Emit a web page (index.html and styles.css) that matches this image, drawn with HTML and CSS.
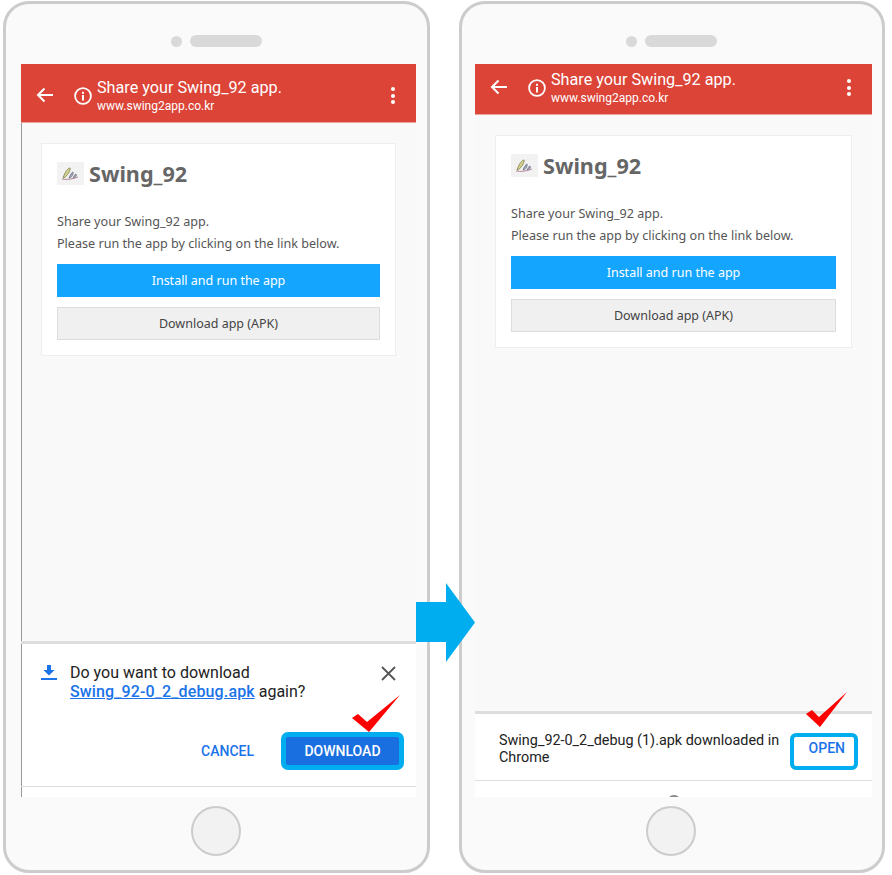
FILE: index.html
```html
<!DOCTYPE html>
<html lang="en">
  <head>
    <meta charset="UTF-8" />
    <meta name="viewport" content="width=device-width, initial-scale=1.0" />
    <title>Swing_92 download steps</title>
    <link rel="stylesheet" href="styles.css">
  </head>

  <body>
    <div class="page">
      <!-- step 1 -->
      <div class="phone phone-left">
        <div class="speaker"><span class="dot"></span><span class="pill"></span></div>
        <div class="screen screen-left">
          <div class="appbar appbar-tall">
            <svg class="back" width="18" height="16" viewBox="0 0 18 16"><path d="M17 8H2M8.500 1.500 2 8l6.500 6.500" fill="none" stroke="#fff" stroke-width="2"/></svg>
            <svg class="info" width="18" height="18" viewBox="0 0 18 18"><circle cx="9" cy="9" r="7.900" fill="none" stroke="#fff" stroke-width="1.800"/><rect x="8" y="8" width="2" height="5.500" fill="#fff"/><rect x="8" y="4.800" width="2" height="2" fill="#fff"/></svg>
            <div class="appbar-text">
              <div class="appbar-title">Share your Swing_92 app.</div>
              <div class="appbar-url">www.swing2app.co.kr</div>
            </div>
            <div class="dots"><span></span><span></span><span></span></div>
          </div>
          <div class="content">
            <div class="card">
              <div class="card-head">
                <div class="logo">
                  <svg width="27" height="23" viewBox="0 0 27 23"><path d="M6 16C8 10 11 6 13 6c1 2-3 8-6 10z" fill="#d8d48a" stroke="#8d8f60"/><path d="M12 16c1-3 3-6 4-6 1 1-1 5-3 6zM16 16c1-2 2-4 3-4 1 1 0 3-2 4z" fill="#9fa5b8" stroke="#6b6f80" stroke-width=".7"/><path d="M5 17c5 1 11 0 16-2" fill="none" stroke="#b58c9a"/></svg>
                </div>
                <div class="card-title">Swing_92</div>
              </div>
              <p class="card-text">Share your Swing_92 app.<br>Please run the app by clicking on the link below.</p>
              <div class="btn btn-blue">Install and run the app</div>
              <div class="btn btn-gray">Download app (APK)</div>
            </div>
          </div>
          <div class="sheet sheet-download">
            <div class="sheet-top">
              <svg class="dl-icon" width="16" height="15" viewBox="0 0 16 15"><path d="M6 0h4v5h3.500L8 10.500 2.500 5H6z" fill="#1a73e8"/><rect y="13" width="16" height="2" fill="#1a73e8"/></svg>
              <div class="dl-text">Do you want to download<br><a href="#">Swing_92-0_2_debug.apk</a> again?</div>
              <svg class="close" width="15" height="15" viewBox="0 0 15 15"><path d="M1 1l13 13M14 1 1 14" stroke="#555" stroke-width="1.800"/></svg>
            </div>
            <div class="sheet-actions">
              <span class="cancel">CANCEL</span>
              <div class="download-btn">
                DOWNLOAD
                <svg class="check check-left" width="48" height="37" viewBox="0 0 48 37"><polygon points="0,23 6,19 15,27 48,0 17,37" fill="#f00"/></svg>
              </div>
            </div>
            <div class="sheet-rule"></div>
          </div>
        </div>
        <div class="home"><span class="home-btn"></span></div>
      </div>

      <!-- step 2 -->
      <div class="phone phone-right">
        <div class="speaker"><span class="dot"></span><span class="pill"></span></div>
        <div class="screen">
          <div class="appbar">
            <svg class="back" width="18" height="16" viewBox="0 0 18 16"><path d="M17 8H2M8.500 1.500 2 8l6.500 6.500" fill="none" stroke="#fff" stroke-width="2"/></svg>
            <svg class="info" width="18" height="18" viewBox="0 0 18 18"><circle cx="9" cy="9" r="7.900" fill="none" stroke="#fff" stroke-width="1.800"/><rect x="8" y="8" width="2" height="5.500" fill="#fff"/><rect x="8" y="4.800" width="2" height="2" fill="#fff"/></svg>
            <div class="appbar-text">
              <div class="appbar-title">Share your Swing_92 app.</div>
              <div class="appbar-url">www.swing2app.co.kr</div>
            </div>
            <div class="dots"><span></span><span></span><span></span></div>
          </div>
          <div class="content">
            <div class="card">
              <div class="card-head">
                <div class="logo">
                  <svg width="27" height="23" viewBox="0 0 27 23"><path d="M6 16C8 10 11 6 13 6c1 2-3 8-6 10z" fill="#d8d48a" stroke="#8d8f60"/><path d="M12 16c1-3 3-6 4-6 1 1-1 5-3 6zM16 16c1-2 2-4 3-4 1 1 0 3-2 4z" fill="#9fa5b8" stroke="#6b6f80" stroke-width=".7"/><path d="M5 17c5 1 11 0 16-2" fill="none" stroke="#b58c9a"/></svg>
                </div>
                <div class="card-title">Swing_92</div>
              </div>
              <p class="card-text">Share your Swing_92 app.<br>Please run the app by clicking on the link below.</p>
              <div class="btn btn-blue">Install and run the app</div>
              <div class="btn btn-gray">Download app (APK)</div>
            </div>
          </div>
          <div class="sheet sheet-done">
            <div class="done-row">
              <div class="done-text">Swing_92-0_2_debug (1).apk downloaded in Chrome</div>
              <div class="open-btn">
                OPEN
                <svg class="check check-right" width="41" height="35" viewBox="0 0 41 35"><polygon points="0,22 6,18 13,25 41,0 14,35" fill="#f00"/></svg>
              </div>
            </div>
            <div class="sheet-rule"></div>
            <div class="nav-peek"><span></span></div>
          </div>
        </div>
        <div class="home"><span class="home-btn"></span></div>
      </div>

      <svg class="step-arrow" width="59" height="79" viewBox="0 0 59 79"><polygon points="0,19 30,19 30,0 59,39.500 30,79 30,59 0,59" fill="#00aeef"/></svg>
    </div>
  </body>
</html>
```

FILE: styles.css
```css
body {
  margin: 0;
  padding: 0;
  background-color: #fff;
  font-family: Roboto, Arial, sans-serif;
}

.page {
  position: relative;
  display: flex;
  gap: 29px;
  padding: 1px 0 0 3px;
}

.phone {
  box-sizing: border-box;
  height: 872px;
  border: 3px solid #ccc;
  border-radius: 26px;
  background-color: #fafafa;
}

.phone-left {
  width: 427px;
  padding: 0 11px 0 15px;
}

.phone-right {
  width: 426px;
  padding: 0 10px 0 13px;
}

.speaker {
  height: 60px;
  display: flex;
  justify-content: center;
  align-items: center;
  gap: 8px;
  padding: 14px 4px 0 0;
  box-sizing: border-box;
}

.speaker .dot {
  width: 11px;
  height: 11px;
  border-radius: 50%;
  background-color: #d9d9d9;
}

.speaker .pill {
  width: 72px;
  height: 12px;
  border-radius: 6px;
  background-color: #d9d9d9;
}

.screen {
  height: 733px;
  display: flex;
  flex-direction: column;
  overflow: hidden;
  background-color: #f9f9f9;
}

.screen-left {
  box-shadow: inset 1px 0 0 #999;
}

/* app bar */

.appbar {
  box-sizing: border-box;
  height: 51px;
  flex-shrink: 0;
  display: flex;
  align-items: center;
  padding: 0 21px 0 15px;
  background-color: #db4437;
  border-bottom: 1px solid #e8a59e;
  color: #fff;
}

.appbar-tall {
  height: 59px;
  padding-top: 8px;
}

.back {
  margin: 0 20px 4px 0;
}

.info {
  margin: 0 5px 3px 0;
}

.appbar-text {
  flex: 1;
}

.appbar-title {
  font-size: 16.200px;
  line-height: 20px;
  margin-top: -2px;
}

.appbar-url {
  font-size: 12px;
  line-height: 16px;
}

.dots {
  display: flex;
  flex-direction: column;
  gap: 2.500px;
  margin-bottom: 3px;
}

.dots span {
  width: 4px;
  height: 4px;
  border-radius: 50%;
  background-color: #fff;
}

/* card */

.content {
  flex: 1;
  padding: 20px 20px 0;
}

.card {
  box-sizing: border-box;
  height: 213px;
  padding: 18px 15px 0;
  background-color: #fff;
  border: 1px solid #eee;
}

.card-head {
  display: flex;
  align-items: flex-start;
  gap: 5px;
}

.logo {
  width: 27px;
  height: 23px;
  background-color: #f2f2f2;
}

.logo svg {
  display: block;
}

.card-title {
  font-family: "Noto Sans", sans-serif;
  font-size: 21.600px;
  font-weight: 700;
  line-height: 23px;
  color: #666;
}

.card-text {
  margin: 26px 0 9px;
  font-family: "Noto Sans", sans-serif;
  font-size: 12.600px;
  line-height: 22px;
  color: #555;
}

.btn {
  box-sizing: border-box;
  height: 33px;
  line-height: 33px;
  text-align: center;
  font-family: "Noto Sans", sans-serif;
  font-size: 12.500px;
}

.btn-blue {
  background-color: #14a5ff;
  color: #fff;
  margin-bottom: 10px;
}

.btn-gray {
  background-color: #f0f0f0;
  border: 1px solid #ddd;
  line-height: 31px;
  color: #444;
}

/* bottom sheets */

.sheet {
  box-sizing: border-box;
  position: relative;
  flex-shrink: 0;
  background-color: #fff;
  border-top: 3px solid #ddd;
}

.sheet-download {
  height: 156px;
  box-shadow: inset 1px 0 0 #999;
}

.sheet-top {
  display: flex;
  align-items: flex-start;
  padding: 21px 20px 0;
}

.dl-icon {
  margin-right: 13px;
}

.dl-text {
  flex: 1;
  margin-top: -2px;
  font-size: 16px;
  line-height: 19px;
  color: #222;
}

.dl-text a {
  color: #1a73e8;
  font-weight: 500;
  letter-spacing: .13px;
}

.close {
  margin-top: 1px;
}

.sheet-actions {
  display: flex;
  justify-content: flex-end;
  align-items: center;
  gap: 27px;
  margin: 31px 12px 0 0;
}

.cancel {
  font-size: 14px;
  font-weight: 500;
  color: #1a73e8;
}

.download-btn {
  position: relative;
  box-sizing: border-box;
  width: 123px;
  height: 38px;
  line-height: 28px;
  text-align: center;
  border: 5px solid #00aeef;
  border-radius: 7px;
  background-color: #1a6fe0;
  color: #fff;
  font-size: 14px;
  font-weight: 500;
}

.sheet-rule {
  height: 1px;
  background-color: #ddd;
}

.sheet-download .sheet-rule {
  margin-top: 16px;
}

.sheet-done {
  height: 86px;
}

.done-row {
  box-sizing: border-box;
  height: 66px;
  display: flex;
  align-items: flex-start;
  padding: 17px 14px 0 24px;
}

.done-text {
  flex: 1;
  margin-top: 1px;
  font-size: 14.400px;
  line-height: 17px;
  color: #222;
}

.open-btn {
  position: relative;
  box-sizing: border-box;
  width: 68px;
  height: 37px;
  margin-top: 2px;
  padding: 1px 9px 0 0;
  line-height: 20px;
  text-align: right;
  border: 4px solid #00aeef;
  border-radius: 6px;
  color: #1a73e8;
  font-size: 14px;
  font-weight: 500;
}

.check {
  position: absolute;
}

.check-left {
  left: 66px;
  top: -42px;
}

.check-right {
  left: 12px;
  top: -45px;
}

.nav-peek {
  display: flex;
  justify-content: center;
  padding: 14px 0 0 0;
}

.nav-peek span {
  width: 14px;
  height: 14px;
  box-sizing: border-box;
  border: 2px solid #888;
  border-radius: 50%;
}

/* home button */

.home {
  display: flex;
  justify-content: center;
  padding: 9px 6px 0 0;
}

.home-btn {
  box-sizing: border-box;
  width: 50px;
  height: 50px;
  border: 2px solid #ccc;
  border-radius: 50%;
  background-color: #f2f2f2;
}

.step-arrow {
  position: absolute;
  left: 416px;
  top: 583px;
}
```
